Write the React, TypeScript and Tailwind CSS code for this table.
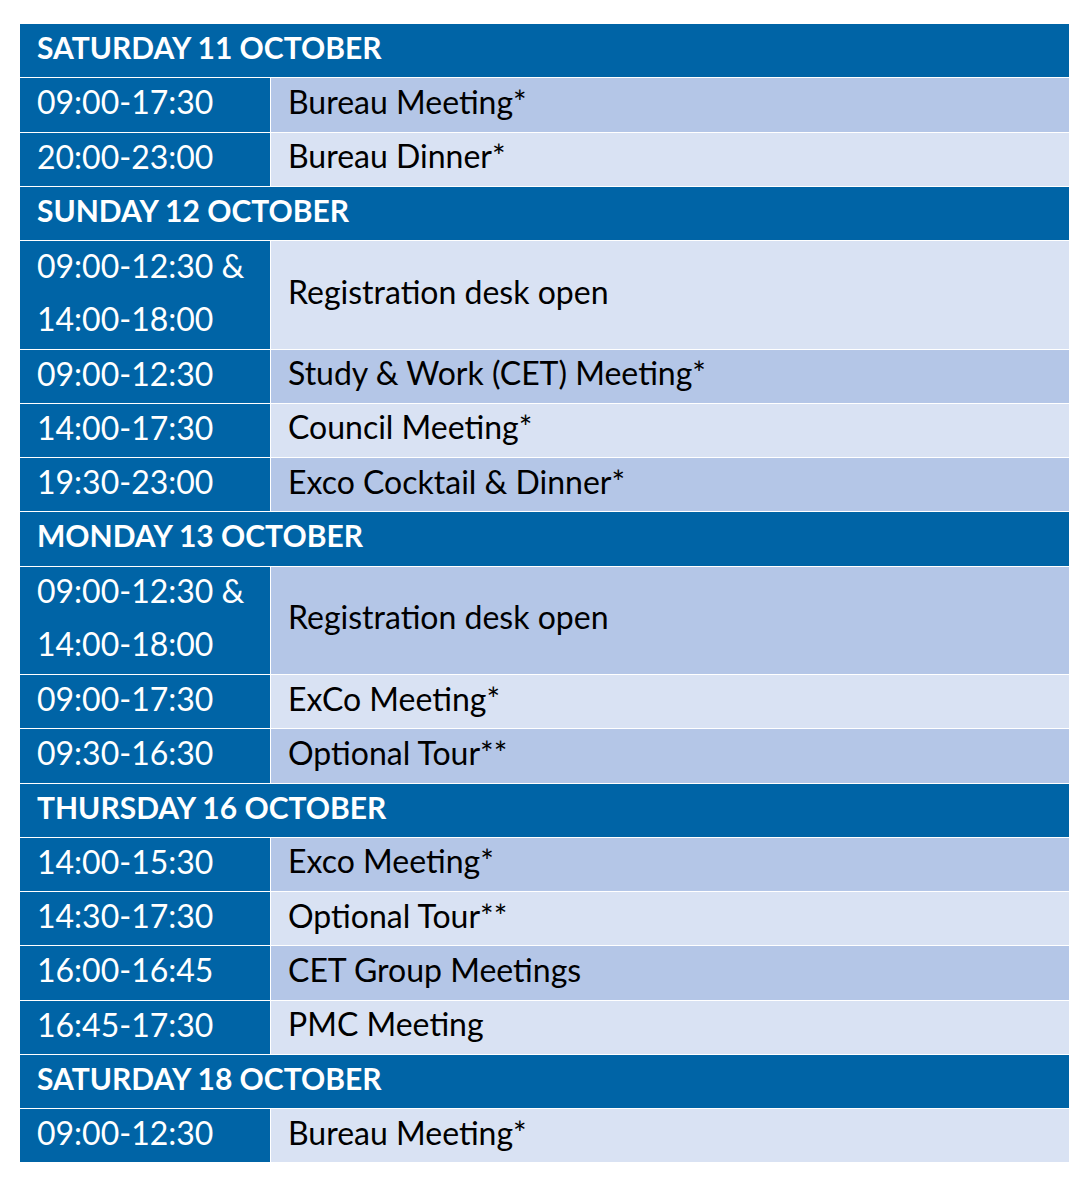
import React from "react";

type Item = { time: string[]; title: string; shade: "dark" | "light" };
type Day = { label: string; items: Item[] };

const days: Day[] = [
  {
    label: "SATURDAY 11 OCTOBER",
    items: [
      { time: ["09:00-17:30"], title: "Bureau Meeting*", shade: "dark" },
      { time: ["20:00-23:00"], title: "Bureau Dinner*", shade: "light" },
    ],
  },
  {
    label: "SUNDAY 12 OCTOBER",
    items: [
      { time: ["09:00-12:30 &", "14:00-18:00"], title: "Registration desk open", shade: "light" },
      { time: ["09:00-12:30"], title: "Study & Work (CET) Meeting*", shade: "dark" },
      { time: ["14:00-17:30"], title: "Council Meeting*", shade: "light" },
      { time: ["19:30-23:00"], title: "Exco Cocktail & Dinner*", shade: "dark" },
    ],
  },
  {
    label: "MONDAY 13 OCTOBER",
    items: [
      { time: ["09:00-12:30 &", "14:00-18:00"], title: "Registration desk open", shade: "dark" },
      { time: ["09:00-17:30"], title: "ExCo Meeting*", shade: "light" },
      { time: ["09:30-16:30"], title: "Optional Tour**", shade: "dark" },
    ],
  },
  {
    label: "THURSDAY 16 OCTOBER",
    items: [
      { time: ["14:00-15:30"], title: "Exco Meeting*", shade: "dark" },
      { time: ["14:30-17:30"], title: "Optional Tour**", shade: "light" },
      { time: ["16:00-16:45"], title: "CET Group Meetings", shade: "dark" },
      { time: ["16:45-17:30"], title: "PMC Meeting", shade: "light" },
    ],
  },
  {
    label: "SATURDAY 18 OCTOBER",
    items: [{ time: ["09:00-12:30"], title: "Bureau Meeting*", shade: "light" }],
  },
];

function Row({ item }: { item: Item }) {
  const tall = item.time.length > 1;
  return (
    <div className={`flex gap-px text-[32px] ${tall ? "h-[107.5px]" : "h-[53.25px]"}`}>
      <div className="w-[250px] shrink-0 bg-[#0064a6] text-white pl-[17px] flex flex-col justify-center pb-[6px]">
        {item.time.map((t) => (
          <div key={t} className="leading-[53px]">{t}</div>
        ))}
      </div>
      <div
        className={`flex-1 flex items-center pl-[17px] pb-[6px] text-black ${
          item.shade === "dark" ? "bg-[#b4c6e7]" : "bg-[#d9e2f3]"
        }`}
      >
        {item.title}
      </div>
    </div>
  );
}

export default function App() {
  return (
    <div className="bg-white w-[1082px] h-[1180px] pt-[24px] pl-[20px]">
      <div
        className="w-[1049px] flex flex-col gap-px"
        style={{ fontFamily: "Lato, 'Open Sans', sans-serif" }}
      >
        {days.map((d) => (
          <React.Fragment key={d.label}>
            <div className="h-[53.25px] bg-[#0064a6] text-white text-[30px] font-bold flex items-center pl-[17px] pb-[6px]">
              {d.label}
            </div>
            {d.items.map((it, i) => (
              <Row key={d.label + i} item={it} />
            ))}
          </React.Fragment>
        ))}
      </div>
    </div>
  );
}
